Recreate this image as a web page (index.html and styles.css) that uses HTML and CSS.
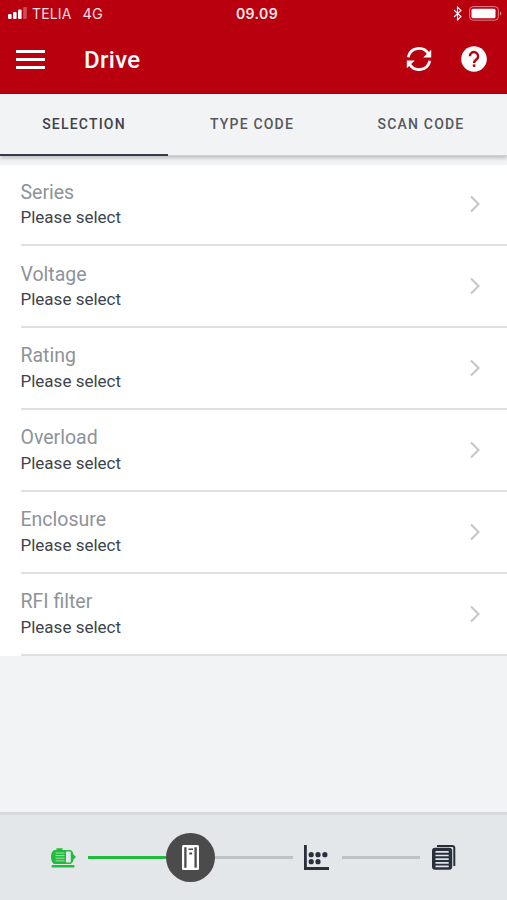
FILE: index.html
```html
<!DOCTYPE html>
<html lang="en">
<head>
<meta charset="utf-8">
<title>Drive</title>
<link rel="stylesheet" href="styles.css">
</head>
<body>
<div class="app">
  <div class="status">
    <div class="carrier">
      <svg width="19" height="12" viewBox="0 0 19 12" fill="#fff"><rect y="7" width="3.6" height="5" rx="1"/><rect x="5" y="5" width="3.6" height="7" rx="1"/><rect x="10" y="2.5" width="3.6" height="9.500" rx="1"/><rect x="15.200" width="3.600" height="12" rx="1" opacity=".3"/></svg>
      <span class="name">TELIA</span><span class="network">4G</span>
    </div>
    <div class="clock">09.09</div>
    <div class="power">
      <svg width="10" height="15" viewBox="0 0 10 15" fill="none" stroke="#fff" stroke-width="1.100"><path d="M1 4l7 6.500-3.500 3.500V1L8 4.500 1 11"/></svg>
      <svg width="33" height="15" viewBox="0 0 33 15"><rect x=".6" y=".6" width="28.800" height="13.600" rx="3.500" fill="none" stroke="#e1808a" stroke-width="1"/><rect x="2.500" y="2.700" width="24" height="9.500" rx="1.500" fill="#fff"/><path d="M31 5.500c1.800.5 1.800 3.500 0 4z" fill="#e1808a"/></svg>
    </div>
  </div>
  <header class="bar">
    <div class="menu"><i></i><i></i><i></i></div>
    <h1>Drive</h1>
    <svg class="refresh" width="26" height="26" viewBox="0 0 26 26" fill="none" stroke="#fff" stroke-width="2.800"><path d="M2.200 11.300A11 11 0 0 1 22.500 8M23.800 14.700A11 11 0 0 1 3.500 18"/><path d="M25.200 3.800v7.700h-8zM.8 22.200v-7.700h8z" fill="#fff" stroke="none"/></svg>
    <svg width="26" height="26" viewBox="0 0 26 26"><circle cx="13" cy="13" r="12.800" fill="#fff"/><path d="M8.900 10.200a4.100 4.100 0 1 1 7.100 2.700c-1.500 1.400-2.900 2-2.900 4" fill="none" stroke="#b8000f" stroke-width="2.400"/><rect x="11.800" y="18.400" width="2.600" height="2.500" fill="#b8000f"/></svg>
  </header>
  <nav class="tabs">
    <div class="tab active">SELECTION</div>
    <div class="tab">TYPE CODE</div>
    <div class="tab">SCAN CODE</div>
  </nav>
  <main class="list">
    <div class="row"><div><div class="label">Series</div><div class="value">Please select</div></div><svg class="chevron" viewBox="0 0 12 18"><path d="M2 1.500l7.500 7.500L2 16.500"/></svg></div>
    <div class="row"><div><div class="label">Voltage</div><div class="value">Please select</div></div><svg class="chevron" viewBox="0 0 12 18"><path d="M2 1.500l7.500 7.500L2 16.500"/></svg></div>
    <div class="row"><div><div class="label">Rating</div><div class="value">Please select</div></div><svg class="chevron" viewBox="0 0 12 18"><path d="M2 1.500l7.500 7.500L2 16.500"/></svg></div>
    <div class="row"><div><div class="label">Overload</div><div class="value">Please select</div></div><svg class="chevron" viewBox="0 0 12 18"><path d="M2 1.500l7.500 7.500L2 16.500"/></svg></div>
    <div class="row"><div><div class="label">Enclosure</div><div class="value">Please select</div></div><svg class="chevron" viewBox="0 0 12 18"><path d="M2 1.500l7.500 7.500L2 16.500"/></svg></div>
    <div class="row"><div><div class="label">RFI filter</div><div class="value">Please select</div></div><svg class="chevron" viewBox="0 0 12 18"><path d="M2 1.500l7.500 7.500L2 16.500"/></svg></div>
  </main>
  <footer class="steps">
    <svg class="motor" width="25" height="20" viewBox="0 0 25 20" fill="#20bd3a"><path d="M3.500 2h2V.3h6V2H15v14H3.500C2 16 0 13 0 9s2-7 3.500-7z"/><path d="M15 2.800h4.200c1 0 2.800 2.400 2.800 6.200s-1.800 6.200-2.800 6.200H15" fill="none" stroke="#20bd3a" stroke-width="1.600"/><path d="M19.800 4h1.500l1.200 3 2 1v2l-2 1-1.200 3h-1.500z"/><path d="M4.500 5h9M4.500 7.600h9M4.500 10.200h9M4.500 12.800h9" stroke="#a4dfb0" stroke-width="1"/><rect x=".5" y="17" width="23" height="2.500" rx="1"/></svg>
    <span class="link done"></span>
    <div class="current"><svg width="17" height="25" viewBox="0 0 17 25"><rect width="17" height="25" rx="1.500" fill="#fff"/><path d="M3.400 2.300v20.500M13.600 2.300v20.500" stroke="#4b4b4b" stroke-width="2.300"/><path d="M6.500 3.500h4.500v1.500H6.500zM7.300 7.500h2.800v2h-2.800z" fill="#4b4b4b"/></svg></div>
    <span class="link first"></span>
    <svg class="chart" width="25" height="25" viewBox="0 0 25 25" fill="#29303c"><path d="M0 0h2.800v22H25v3H0z"/><circle cx="7.200" cy="9.700" r="2.600"/><circle cx="14" cy="9.700" r="2.600"/><circle cx="20.900" cy="9.700" r="2.600"/><circle cx="7.200" cy="16.700" r="2.600"/><circle cx="14" cy="16.700" r="2.600"/></svg>
    <span class="link second"></span>
    <svg class="docs" width="24" height="25" viewBox="0 0 24 25"><path d="M5 1h15a2.300 2.300 0 0 1 2.300 2.300V21" fill="none" stroke="#29303c" stroke-width="2"/><rect y="2.800" width="20.200" height="22" rx="3" fill="#29303c"/><path d="M3.500 6.800h13.200M3.500 10.500h13.200M3.500 14.200h13.200M3.500 17.900h13.200M3.500 21.400h13.200" stroke="#dfe2e6" stroke-width="1.700"/></svg>
  </footer>
</div>
</body>
</html>
```
FILE: styles.css
```css
* { box-sizing: border-box; }
body { margin: 0; font-family: Roboto, "Liberation Sans", sans-serif; }
svg { display: block; flex: none; }
.app { width: 507px; height: 900px; display: flex; flex-direction: column; background: #f2f3f5; overflow: hidden; }
.status { height: 28px; display: grid; grid-template-columns: 1fr 60px 1fr; align-items: center; background: #b8000f; color: #fff; font: 14px Inter, sans-serif; padding: 0 5px 2px 8px; flex: none; }
.carrier, .power { display: flex; align-items: center; }
.name { margin-left: 5px; letter-spacing: .15px; color: #f8dfe1; }
.network { margin-left: 11px; font-size: 14.5px; color: #f8dfe1; }
.clock { text-align: center; font-weight: 600; letter-spacing: .4px; color: #fbe9ea; padding-left: 4px; }
.power { justify-content: flex-end; gap: 6px; }
.bar { height: 66px; display: flex; align-items: center; padding: 0 20px 4px 16px; background: #b8000f; flex: none; }
.menu { width: 29px; display: grid; gap: 5px; }
.menu i { height: 3px; background: #fff; }
.bar h1 { margin: 0 auto 0 39px; color: #fff; font-size: 24px; font-weight: 500; line-height: 30px; letter-spacing: .3px; padding-top: 2px; }
.refresh { margin-right: 29px; }
.tabs { height: 62px; display: grid; grid-template-columns: repeat(3, 1fr); background: #f2f3f5; box-shadow: 0 2px 4px rgba(0, 0, 0, .23); border-bottom: 1px solid #d0d1d3; flex: none; }
.tab { text-align: center; font-size: 14px; font-weight: 500; letter-spacing: 1.2px; line-height: 60px; color: #56585c; padding-right: 3px; }
.active { color: #3d424a; border-bottom: 2.500px solid #343a48; margin-right: 1px; padding-right: 0; }
.list { margin-top: 8.500px; padding-left: 20.500px; background: #fff; }
.row { height: 81.900px; display: flex; justify-content: space-between; align-items: center; padding: 0 26px 0 0; border-bottom: 2px solid #dee1e2; }
.label { font-size: 19.500px; line-height: 26px; color: #8d9398; }
.value { font-size: 17px; line-height: 24px; margin-top: -.5px; color: #3e444b; }
.chevron { width: 12px; height: 18px; fill: none; stroke: #c3c5c7; stroke-width: 2; }
.steps { height: 88px; margin-top: auto; display: flex; align-items: center; border-top: 3px solid #d6d8db; background: #e4e7ea; padding: 0 0 0 51px; }
.link { height: 2.500px; background: #bfc2c5; }
.done { width: 78px; margin-left: 12px; background: #20bd3a; }
.current { width: 49px; height: 49px; border-radius: 50%; background: #4b4b4b; display: grid; place-items: center; }
.first { width: 78px; }
.chart { margin-left: 11px; }
.second { width: 78px; margin-left: 13px; }
.docs { margin-left: 12px; }
```
